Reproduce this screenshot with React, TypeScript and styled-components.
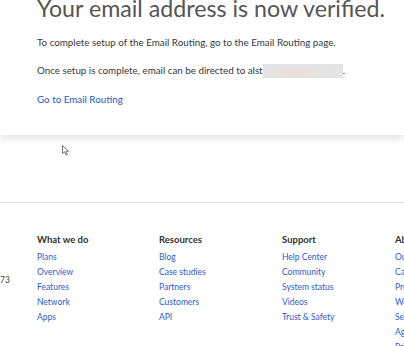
import styled, { createGlobalStyle } from 'styled-components';

const GlobalStyle = createGlobalStyle`
  html, body {
    margin: 0;
    padding: 0;
    background: #ffffff;
    overflow: hidden;
  }
  body {
    font-family: Lato, "Liberation Sans", sans-serif;
    width: 404px;
    height: 346px;
  }
`;

const Page = styled.div`
  position: relative;
  width: 404px;
  height: 346px;
  overflow: hidden;
`;

const Card = styled.section`
  background: #fff;
  padding: 0 0 27px 37px;
  margin-top: -7px;
  box-shadow: 0 3px 8px rgba(0, 0, 0, 0.12);
`;

const Heading = styled.h1`
  margin: 0 0 10.5px;
  font-size: 23.2px;
  font-weight: 400;
  line-height: 30px;
  color: #555;
  white-space: nowrap;
`;

const Para = styled.p`
  margin: 0 0 11.5px;
  font-size: 9.8px;
  line-height: 17px;
  color: #36393a;
  white-space: nowrap;
`;

const Redacted = styled.span`
  display: inline-block;
  width: 80px;
  height: 14px;
  vertical-align: -4px;
  background: radial-gradient(ellipse at 40% 60%, #efdcd8 0%, #e6e4e6 45%, #e3e3e5 100%);
  filter: blur(0.6px);
`;

const Link = styled.a`
  display: block;
  width: max-content;
  color: #1f58c4;
  text-decoration: none;
  font-size: 9.8px;
  line-height: 17px;
`;

const Spacer = styled.div`
  height: 67px;
`;

const Footer = styled.footer`
  border-top: 1px solid #e3e3e3;
  padding-top: 29px;
  display: grid;
  grid-template-columns: 37px 122px 123px 113px 90px;
`;

const Aside = styled.div`
  padding-top: 41px;
  font-size: 8.5px;
  line-height: 15px;
  color: #444;
`;

const Column = styled.div`
  display: flex;
  flex-direction: column;
`;

const ColTitle = styled.div`
  font-size: 9.5px;
  font-weight: 700;
  color: #333;
  line-height: 16px;
  margin-bottom: 2px;
  white-space: nowrap;
`;

const ColLink = styled.a`
  font-size: 8.5px;
  line-height: 15px;
  color: #2c5dcb;
  text-decoration: none;
`;

const Cursor = styled.svg`
  position: absolute;
  left: 62px;
  top: 145px;
`;

const columns = [
  { title: 'What we do', links: ['Plans', 'Overview', 'Features', 'Network', 'Apps'] },
  { title: 'Resources', links: ['Blog', 'Case studies', 'Partners', 'Customers', 'API'] },
  { title: 'Support', links: ['Help Center', 'Community', 'System status', 'Videos', 'Trust & Safety'] },
  {
    title: 'About us',
    links: ['Our team', 'Careers', 'Press', 'Website Terms of Use', 'Self-serve Subscription Agreement', 'Privacy Policy'],
  },
];

export default function App() {
  return (
    <Page>
      <GlobalStyle />
      <Card>
        <Heading>Your email address is now verified.</Heading>
        <Para>To complete setup of the Email Routing, go to the Email Routing page.</Para>
        <Para>
          Once setup is complete, email can be directed to alst<Redacted />.
        </Para>
        <Link href="#">Go to Email Routing</Link>
      </Card>
      <Spacer />
      <Footer>
        <Aside>73</Aside>
        {columns.map((col) => (
          <Column key={col.title}>
            <ColTitle>{col.title}</ColTitle>
            {col.links.map((l) => (
              <ColLink key={l} href="#">{l}</ColLink>
            ))}
          </Column>
        ))}
      </Footer>
      <Cursor width="8" height="11" viewBox="0 0 8 11">
        <path d="M0.5 0.5 L0.5 8.5 L2.5 6.8 L4 10 L5.3 9.4 L3.9 6.3 L6.6 6.3 Z" fill="#fff" stroke="#555" strokeWidth="0.8" />
      </Cursor>
    </Page>
  );
}
